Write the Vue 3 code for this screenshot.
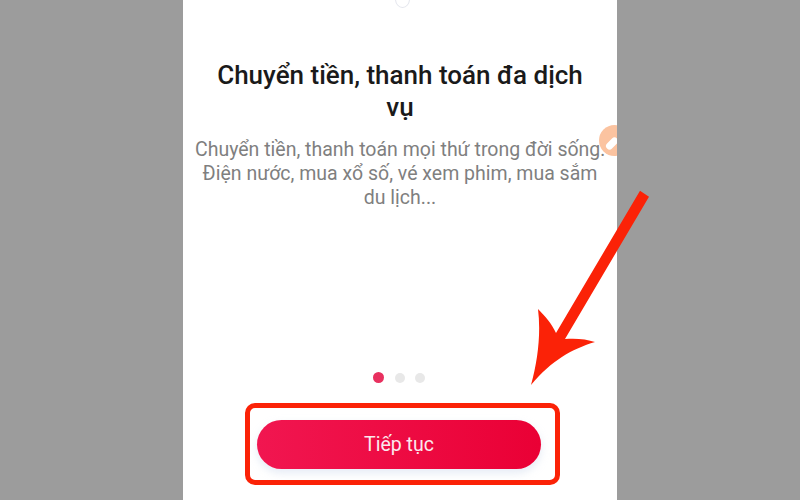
<script setup>
const dots = [true, false, false]
</script>

<template>
  <div class="page">
    <div class="phone">
      <span class="top-mark"></span>
      <h1 class="title">Chuyển tiền, thanh toán đa dịch vụ</h1>
      <p class="desc">Chuyển tiền, thanh toán mọi thứ trong đời sống: Điện nước, mua xổ số, vé xem phim, mua sắm du lịch...</p>
      <div class="dots">
        <span v-for="(on, i) in dots" :key="i" :class="['dot', { active: on }]"></span>
      </div>
      <div class="highlight">
        <button class="next">Tiếp tục</button>
      </div>
      <span class="blob"><span class="blob-mark"></span></span>
    </div>
    <svg class="arrow" width="800" height="500" viewBox="0 0 800 500">
      <path d="M640 190.7 L649 196.7 L565 339 C575 338 587 339 595 342 C572 349 552 360 531 385 C538 360 541 333 538 309 C545 316 552 324 556 333 Z" fill="#fb2207" />
    </svg>
  </div>
</template>

<style scoped>
.page {
  position: relative;
  width: 800px;
  height: 500px;
  overflow: hidden;
  background: #9c9c9c;
  display: flex;
  justify-content: center;
  font-family: Roboto, "Liberation Sans", sans-serif;
}

.phone {
  position: relative;
  box-sizing: border-box;
  width: 434px;
  height: 500px;
  background: #fff;
  display: flex;
  flex-direction: column;
  align-items: center;
  padding-top: 59px;
  overflow: hidden;
}

.top-mark {
  position: absolute;
  top: -10px;
  left: 212px;
  width: 13px;
  height: 16px;
  border: 1px solid #e4e6ed;
  border-radius: 50%;
}

.title {
  margin: 0;
  width: 380px;
  font-size: 26px;
  line-height: 32px;
  font-weight: 500;
  color: #1a1a1a;
  text-align: center;
}

.desc {
  margin: 15px 0 0;
  width: 416px;
  font-size: 19.5px;
  line-height: 24px;
  color: #7f7f7f;
  text-align: center;
}

.dots {
  display: flex;
  align-items: center;
  gap: 10.5px;
  margin: 162px 2px 0 0;
}

.dot {
  width: 10px;
  height: 10px;
  border-radius: 50%;
  background: #e8e8e8;
}

.dot.active {
  width: 11px;
  height: 11px;
  background: #e8305f;
}

.highlight {
  box-sizing: border-box;
  width: 315px;
  height: 82px;
  margin-top: 20px;
  margin-left: 5px;
  padding: 12px 0 0 7px;
  border: 5px solid #fb2207;
  border-radius: 10px;
}

.next {
  display: block;
  width: 284px;
  height: 49px;
  padding: 0;
  border: none;
  border-radius: 25px;
  background: linear-gradient(90deg, #f11650, #ea0035);
  box-shadow: 0 4px 8px rgba(190, 205, 230, 0.4);
  color: #fbe9ee;
  font-family: inherit;
  font-size: 19.5px;
}

.blob {
  position: absolute;
  left: 416px;
  top: 125px;
  width: 31px;
  height: 31px;
  border-radius: 50%;
  background: #fbc3a0;
}

.blob-mark {
  position: absolute;
  left: 6px;
  top: 15px;
  width: 14px;
  height: 7px;
  border-radius: 4px;
  background: #fff;
  transform: rotate(-45deg);
}

.arrow {
  position: absolute;
  left: 0;
  top: 0;
}
</style>
